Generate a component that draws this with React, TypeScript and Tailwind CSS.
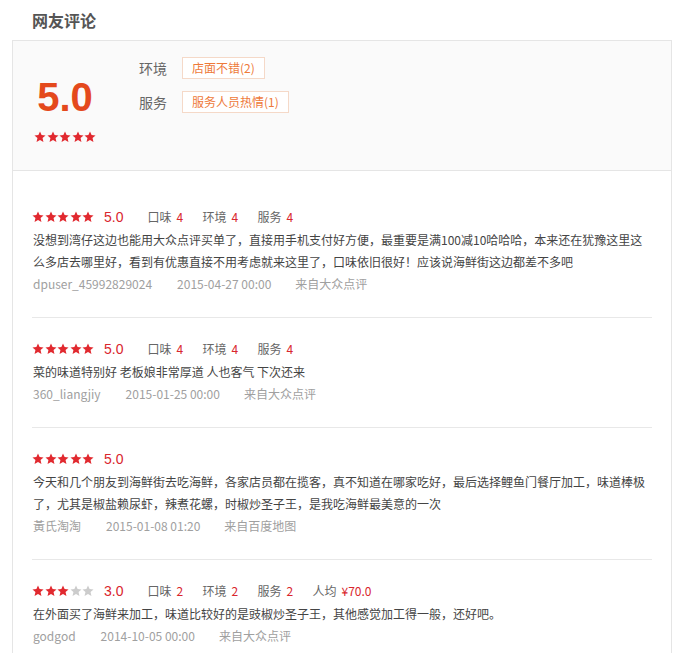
import React from "react";

const RED = "#e1292f";

function Star({ on = true }: { on?: boolean }) {
  return (
    <svg width="12" height="12" viewBox="0 0 24 24" className="block">
      <path
        d="M12 0.8l3.2 7.3 7.9.7-6 5.3 1.8 7.8L12 17.8l-6.9 4.1 1.8-7.8-6-5.3 7.9-.7z"
        fill={on ? RED : "#cccccc"}
      />
    </svg>
  );
}

function Stars({ n }: { n: number }) {
  return (
    <div className="flex gap-[0.5px]">
      {[0, 1, 2, 3, 4].map((i) => (
        <Star key={i} on={i < n} />
      ))}
    </div>
  );
}

type Review = {
  stars: number;
  score: string;
  sub?: { k: string; v: string }[];
  text: string;
  user: string;
  date: string;
  src: string;
};

const reviews: Review[] = [
  {
    stars: 5,
    score: "5.0",
    sub: [
      { k: "口味", v: "4" },
      { k: "环境", v: "4" },
      { k: "服务", v: "4" },
    ],
    text: "没想到湾仔这边也能用大众点评买单了，直接用手机支付好方便，最重要是满100减10哈哈哈，本来还在犹豫这里这么多店去哪里好，看到有优惠直接不用考虑就来这里了，口味依旧很好！应该说海鲜街这边都差不多吧",
    user: "dpuser_45992829024",
    date: "2015-04-27 00:00",
    src: "来自大众点评",
  },
  {
    stars: 5,
    score: "5.0",
    sub: [
      { k: "口味", v: "4" },
      { k: "环境", v: "4" },
      { k: "服务", v: "4" },
    ],
    text: "菜的味道特别好 老板娘非常厚道 人也客气 下次还来",
    user: "360_liangjiy",
    date: "2015-01-25 00:00",
    src: "来自大众点评",
  },
  {
    stars: 5,
    score: "5.0",
    text: "今天和几个朋友到海鲜街去吃海鲜，各家店员都在揽客，真不知道在哪家吃好，最后选择鲤鱼门餐厅加工，味道棒极了，尤其是椒盐赖尿虾，辣煮花螺，时椒炒圣子王，是我吃海鲜最美意的一次",
    user: "黃氏淘淘",
    date: "2015-01-08 01:20",
    src: "来自百度地图",
  },
  {
    stars: 3,
    score: "3.0",
    sub: [
      { k: "口味", v: "2" },
      { k: "环境", v: "2" },
      { k: "服务", v: "2" },
      { k: "人均", v: "¥70.0" },
    ],
    text: "在外面买了海鲜来加工，味道比较好的是豉椒炒圣子王，其他感觉加工得一般，还好吧。",
    user: "godgod",
    date: "2014-10-05 00:00",
    src: "来自大众点评",
  },
];

export default function App() {
  return (
    <div
      className="w-[688px] h-[653px] overflow-hidden bg-white"
      style={{ fontFamily: '"Noto Sans CJK SC", "Liberation Sans", sans-serif' }}
    >
      <div className="h-[40px] pl-[32px] pt-[9px] text-[16px] leading-[22px] font-bold text-[#555]">
        网友评论
      </div>
      <div className="ml-[12px] w-[660px] border border-[#e5e5e5]">
        <div className="flex h-[130px] bg-[#fafafa] border-b border-[#e5e5e5]">
          <div className="ml-[20px] w-[64px] flex flex-col items-center pt-[32px]">
            <div
              className="text-[40px] leading-[48px] font-bold text-[#e4491c]"
              style={{ fontFamily: '"Liberation Sans", sans-serif' }}
            >
              5.0
            </div>
            <div className="mt-[10px]">
              <Stars n={5} />
            </div>
          </div>
          <div className="ml-[42px] pt-[16px] flex flex-col gap-[12px]">
            <div className="flex items-center h-[22px]">
              <span className="text-[14px] text-[#666] w-[43px]">环境</span>
              <span className="h-[22px] px-[9px] border border-[#f5d9c8] bg-white text-[12px] leading-[20px] text-[#ee7a3a]">
                店面不错(2)
              </span>
            </div>
            <div className="flex items-center h-[22px]">
              <span className="text-[14px] text-[#666] w-[43px]">服务</span>
              <span className="h-[22px] px-[9px] border border-[#f5d9c8] bg-white text-[12px] leading-[20px] text-[#ee7a3a]">
                服务人员热情(1)
              </span>
            </div>
          </div>
        </div>
        <div className="pt-[15px]">
          {reviews.map((r, i) => (
            <div
              key={i}
              className="ml-[19px] w-[620px] pt-[19px] pb-[22px] border-b border-[#e8e8e8]"
            >
              <div className="flex items-center h-[24px]">
                <Stars n={r.stars} />
                <span
                  className="ml-[10px] text-[14px] text-[#d9262d]"
                  style={{ fontFamily: '"Liberation Sans", sans-serif' }}
                >
                  {r.score}
                </span>
                {r.sub && (
                  <div className="flex ml-[24px] text-[12px]">
                    {r.sub.map((s, j) => (
                      <span key={j} className="w-[55px] whitespace-nowrap text-[#666]">
                        {s.k}
                        <span className="ml-[5px] text-[#d9262d]">{s.v}</span>
                      </span>
                    ))}
                  </div>
                )}
              </div>
              <div className="w-[618px] pl-[1px] text-[12px] leading-[22px] text-[#444]">
                {r.text}
              </div>
              <div className="flex pl-[1px] text-[12px] leading-[22px] text-[#a0a0a0]">
                <span>{r.user}</span>
                <span className="ml-[25px]">{r.date}</span>
                <span className="ml-[24px]">{r.src}</span>
              </div>
            </div>
          ))}
        </div>
      </div>
    </div>
  );
}
